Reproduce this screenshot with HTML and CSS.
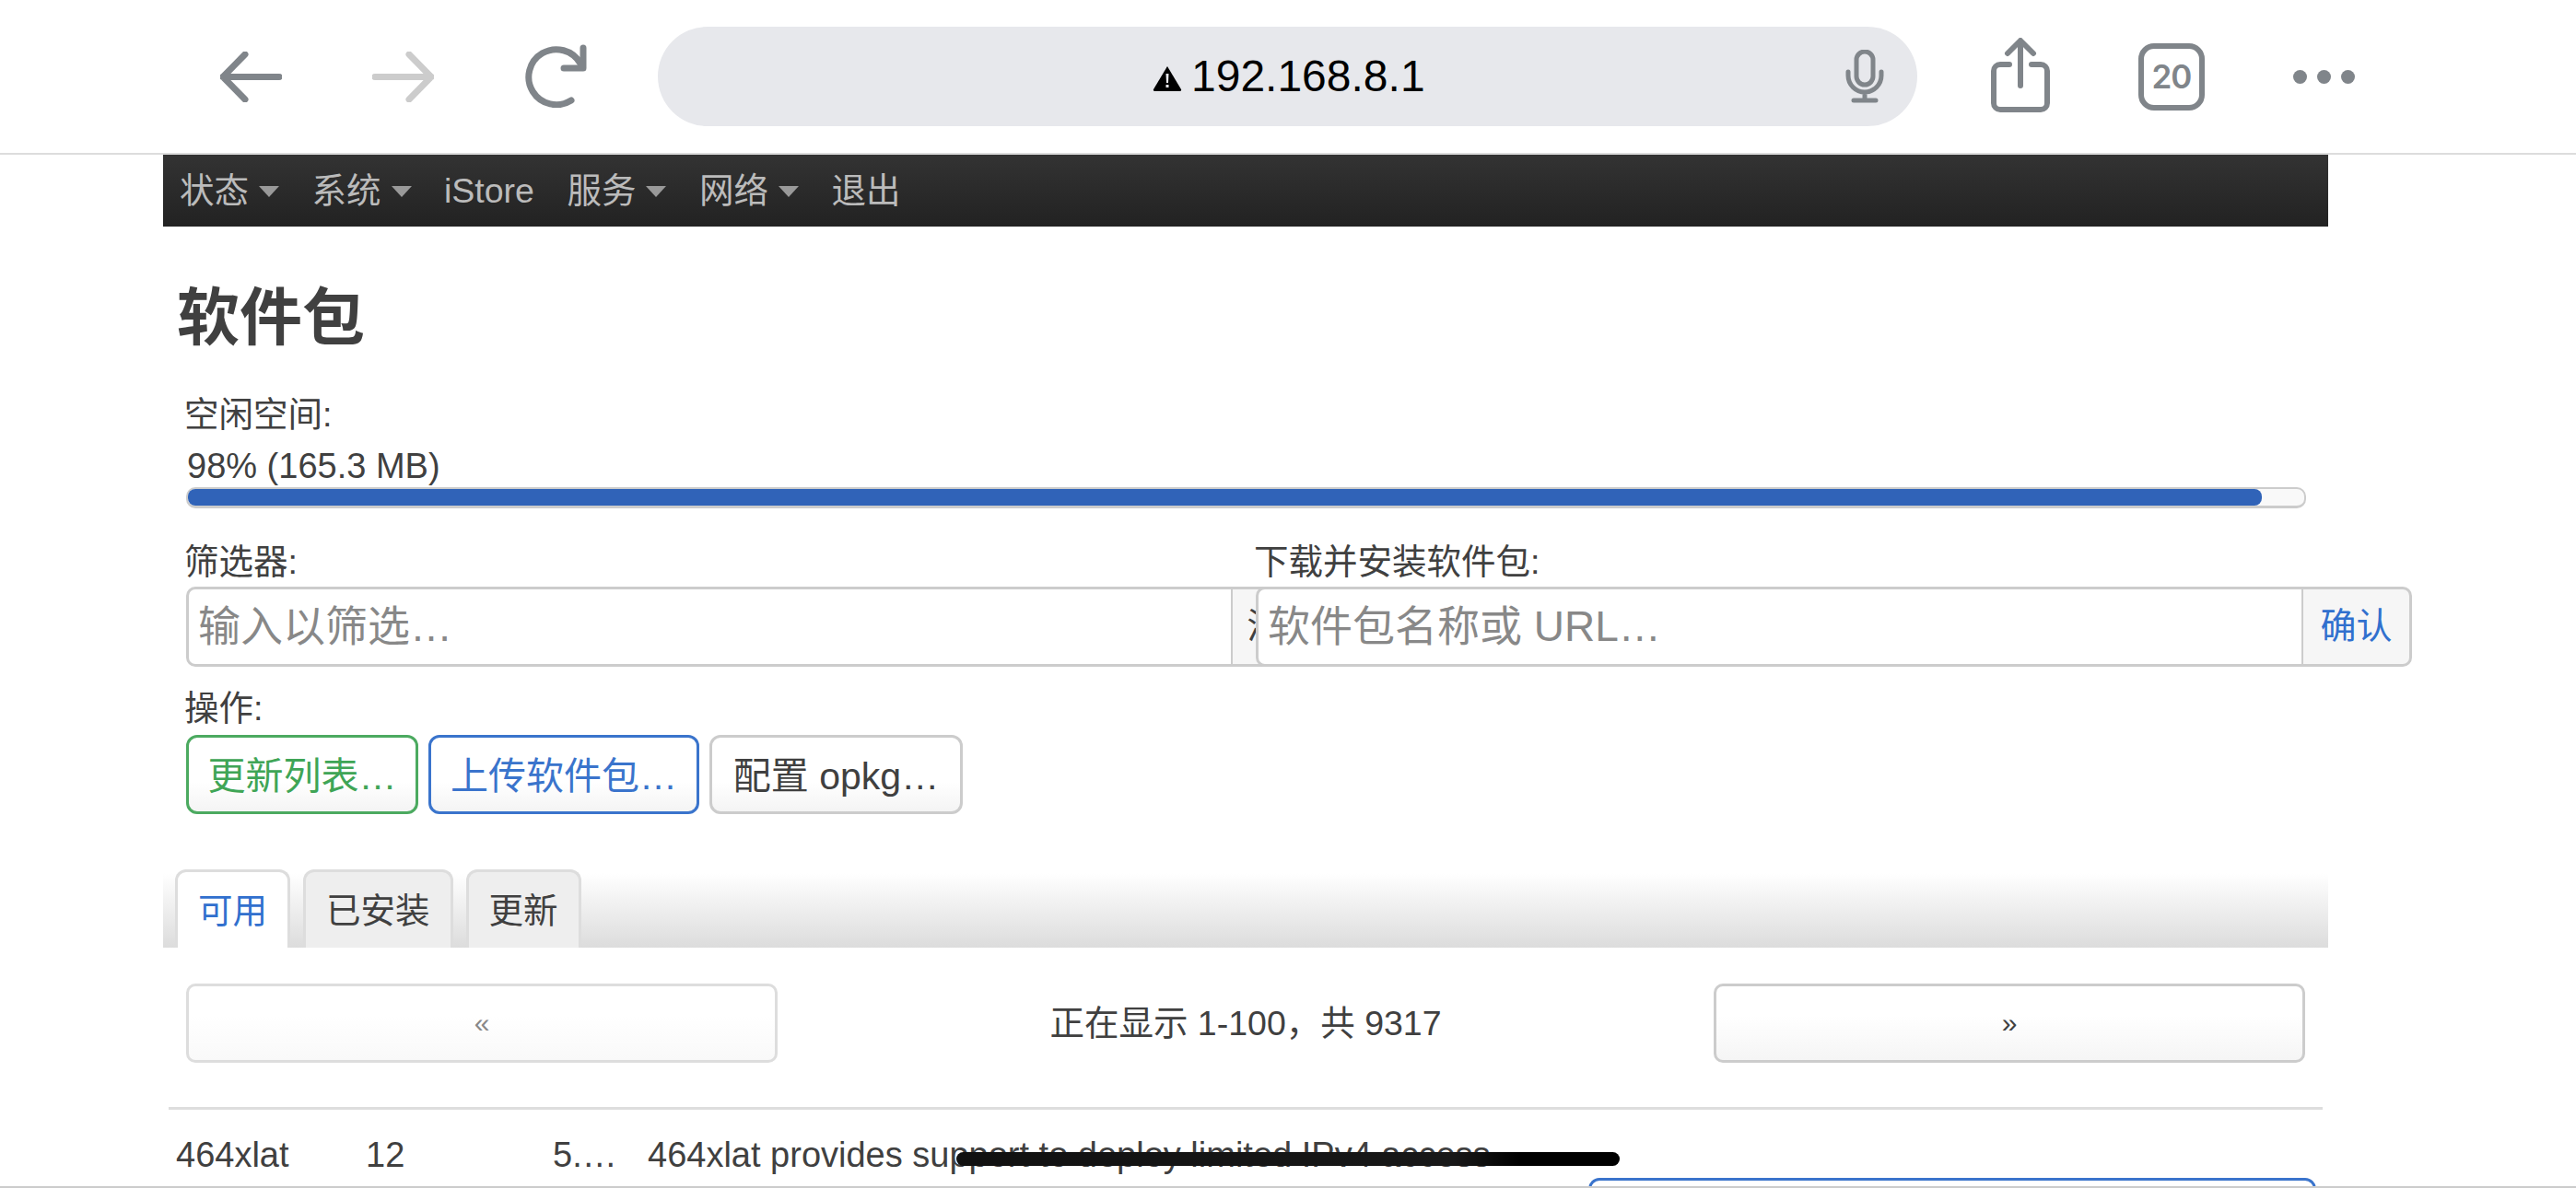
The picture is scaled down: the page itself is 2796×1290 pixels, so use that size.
FILE: index.html
```html
<!DOCTYPE html>
<html lang="zh">
<head>
<meta charset="utf-8">
<title>软件包</title>
<link rel="stylesheet" href="styles.css">
</head>
<body>
<header class="browser">
  <svg class="ic back" viewBox="0 0 67 55"><path d="M27 3 3 27.500 27 52M3 27.500H64"/></svg>
  <svg class="ic fwd" viewBox="0 0 67 55"><path d="M40 3 64 27.500 40 52M64 27.500H3"/></svg>
  <svg class="ic reload" viewBox="0 0 69 69"><path d="M51 61A30 30 0 1 1 61 21"/><path d="M64 4V26H43"/></svg>
  <div class="address">
    <div class="url">
      <svg class="warn" viewBox="0 0 32 28"><path class="warn-tri" d="M16 1 31 26a1.500 1.500 0 0 1-1 2H2a1.500 1.500 0 0 1-1-2Z"/><path class="warn-mark" d="M14.500 9h3l-.5 10h-2ZM14.500 21h3v3h-3Z"/></svg>
      <span>192.168.8.1</span>
    </div>
    <svg class="mic" viewBox="0 0 42 58"><rect x="12" y="2" width="18" height="36" rx="9"/><path d="M3 24V28A18 18 0 0 0 39 28V24M21 46V55M9 55H33"/></svg>
  </div>
  <svg class="ic share" viewBox="0 0 64 81"><path d="M20 29H10a7 7 0 0 0-7 7V71a7 7 0 0 0 7 7H54a7 7 0 0 0 7-7V36a7 7 0 0 0-7-7H44"/><path d="M32 52V4M18 17 32 3 46 17"/></svg>
  <div class="tabcount">20</div>
  <div class="dots"><i></i><i></i><i></i></div>
</header>

<nav class="nav">
  <a class="nav-item">状态<b class="caret"></b></a>
  <a class="nav-item">系统<b class="caret"></b></a>
  <a class="nav-item">iStore</a>
  <a class="nav-item">服务<b class="caret"></b></a>
  <a class="nav-item">网络<b class="caret"></b></a>
  <a class="nav-item">退出</a>
</nav>

<main class="content">
  <h2 class="title">软件包</h2>
  <div class="label">空闲空间:</div>
  <div class="free">98% (165.3 MB)</div>
  <div class="progress"><div class="progress-fill"></div></div>

  <div class="controls">
    <div class="control first">
      <div class="label">筛选器:</div>
      <div class="group">
        <div class="field">输入以筛选…</div>
        <div class="addon dark">清除</div>
      </div>
    </div>
    <div class="control second">
      <div class="label">下载并安装软件包:</div>
      <div class="group">
        <div class="field wide">软件包名称或 URL…</div>
        <div class="addon blue">确认</div>
      </div>
    </div>
  </div>

  <div class="label action-label">操作:</div>
  <div class="actions">
    <button class="btn green">更新列表…</button>
    <button class="btn blue-btn">上传软件包…</button>
    <button class="btn plain">配置 opkg…</button>
  </div>

  <div class="tabbar">
    <div class="tab active">可用</div>
    <div class="tab">已安装</div>
    <div class="tab">更新</div>
  </div>

  <div class="pager">
    <button class="page-btn muted">«</button>
    <div class="page-text">正在显示 1-100，共 9317</div>
    <button class="page-btn">»</button>
  </div>

  <div class="rule"></div>

  <div class="row">
    <div class="cell c-name">464xlat</div>
    <div class="cell c-ver">12</div>
    <div class="cell c-size">5.…</div>
    <div class="cell c-desc">464xlat provides support to deploy limited IPv4 access</div>
    <div class="install"></div>
  </div>
</main>
<div class="bottom-line"></div>
<div class="home"></div>
</body>
</html>
```

FILE: styles.css
```css
* { box-sizing: border-box; }
html, body { margin: 0; height: 1290px; overflow: hidden; background: #fff; }
body {
  font-family: "Liberation Sans", "Noto Sans CJK SC", sans-serif;
  font-size: 37.5px;
  color: #404040;
  position: relative;
}

/* browser chrome */
.browser {
  height: 168px;
  display: flex;
  align-items: center;
  position: relative;
  border-bottom: 2px solid #ddd;
}
.ic { fill: none; stroke: #80858a; stroke-width: 7; stroke-linecap: round; stroke-linejoin: round; flex: none; }
.back { width: 67px; height: 55px; margin-left: 239px; }
.fwd { width: 67px; height: 55px; margin-left: 98px; stroke: #ccc; }
.reload { width: 69px; height: 69px; margin-left: 98px; margin-top: -1px; }
.address {
  width: 1367px;
  height: 108px;
  margin-left: 76px;
  background: #e7e8ec;
  border-radius: 54px;
  display: flex;
  align-items: center;
  position: relative;
  flex: none;
}
.url {
  position: absolute;
  left: 537px;
  display: flex;
  align-items: center;
  gap: 10px;
  color: #000;
  font-size: 48px;
  line-height: 56px;
}
.warn { width: 32px; height: 28px; margin-top: 3px; }
.warn-tri { fill: #000; }
.warn-mark { fill: #e7e8ec; }
.mic {
  position: absolute;
  right: 36px;
  width: 42px;
  height: 58px;
  fill: none;
  stroke: #80858a;
  stroke-width: 5;
  stroke-linecap: round;
}
.share { width: 64px; height: 81px; margin-left: 80px; margin-top: -3px; stroke-width: 6; }
.tabcount {
  width: 72px;
  height: 73px;
  margin-left: 96px;
  border: 6px solid #80858a;
  border-radius: 17px;
  color: #80858a;
  font-family: Inter, sans-serif;
  font-size: 35px;
  font-weight: 600;
  letter-spacing: -1px;
  display: flex;
  align-items: center;
  justify-content: center;
  flex: none;
}
.dots { display: flex; gap: 11px; margin-left: 96px; }
.dots i { width: 15px; height: 15px; border-radius: 50%; background: #80858a; }

/* router nav */
.nav {
  margin-left: 177px;
  width: 2350px;
  height: 78px;
  background: linear-gradient(#333, #222);
  display: flex;
  align-items: center;
  padding-left: 18px;
  gap: 35.5px;
  line-height: 78px;
}
.nav-item { color: #bbb; display: flex; align-items: center; }
.caret {
  width: 0;
  height: 0;
  margin-left: 11px;
  margin-top: 2px;
  border-left: 11px solid transparent;
  border-right: 11px solid transparent;
  border-top: 12px solid #999;
}

/* page */
.content { margin-left: 177px; width: 2350px; }
.title {
  margin: 59px 0 38px 15px;
  font-size: 68px;
  line-height: 80px;
  font-weight: 700;
}
.label { margin-left: 23px; line-height: 54px; }
.free { margin: 4px 0 0 26px; line-height: 50px; font-size: 38px; }
.progress {
  margin: -2px 0 0 25px;
  width: 2301px;
  height: 23px;
  border: 3px solid #ccc;
  border-width: 2px 2px 3px;
  border-radius: 10px;
  background: #f9f9f9;
}
.progress-fill { width: 98%; height: 100%; background: #3063b8; border-radius: 8px; }

.controls { display: flex; margin-top: 31px; height: 141px; }
.control .label { margin-left: -2px; }
.first { margin-left: 25px; width: 1161px; flex: none; position: relative; z-index: 0; }
.second { width: 1255px; flex: none; position: relative; z-index: 1; }
.group { display: flex; height: 87px; }
.first .group { width: 1248px; }
.field {
  flex: 1;
  background: #fff;
  border: 3px solid #ccc;
  border-right-width: 2px;
  border-radius: 10px 0 0 10px;
  padding-left: 10px;
  font-size: 46px;
  line-height: 80px;
  color: #888;
  white-space: nowrap;
}
.addon {
  flex: none;
  border: 3px solid #ccc;
  border-left-width: 0;
  border-radius: 0 10px 10px 0;
  background: #f6f6f6;
  font-size: 39px;
  line-height: 80px;
  text-align: center;
}
.addon.dark { width: 112px; color: #404040; }
.addon.blue { width: 118px; color: #3170ce; }

.action-label { margin-top: 18px; }
.actions { display: flex; gap: 11px; margin: 2px 0 0 25px; }
.btn {
  height: 86px;
  padding: 0 0 5px;
  border: 3px solid #ccc;
  border-radius: 12px;
  background: linear-gradient(#fff, #fff 60%, #f4f4f4);
  font: inherit;
  font-size: 41px;
  color: #404040;
}
.green { width: 252px; border-color: #4caa60; color: #3fa556; }
.blue-btn { width: 294px; border-color: #3a74cc; color: #3a74cc; }
.plain { width: 275px; }

.tabbar {
  margin-top: 60px;
  height: 85px;
  display: flex;
  gap: 14px;
  padding-left: 13px;
  background: linear-gradient(#fff, #fff 5%, #dcdcdc);
}
.tab {
  height: 85px;
  padding: 0 22px;
  border: 3px solid #ddd;
  border-bottom: 0;
  border-radius: 12px 12px 0 0;
  background: #eee;
  line-height: 84px;
}
.tab.active { background: #fff; color: #3170ce; }

.pager { display: flex; align-items: center; margin: 39px 25px 0 25px; justify-content: space-between; }
.page-btn {
  width: 642px;
  height: 86px;
  border: 3px solid #ccc;
  border-radius: 10px;
  background: linear-gradient(#fff, #fff 40%, #f5f5f5);
  font: inherit;
  font-size: 30px;
  color: #404040;
}
.page-btn.muted { border-color: #ddd; color: #888; background: linear-gradient(#fff, #fff 40%, #f9f9f9); }
.page-text { line-height: 54px; }

.rule { margin: 48px 6px 0; height: 3px; background: #ddd; }

.row { display: flex; margin-top: 26px; line-height: 46px; position: relative; font-size: 38px; }
.cell { flex: none; white-space: nowrap; }
.c-name { margin-left: 14px; width: 206px; }
.c-ver { width: 203px; }
.c-size { width: 103px; }
.c-desc { width: 1021px; }
.install {
  width: 790px;
  height: 60px;
  margin-top: 48px;
  border: 3px solid #3a74cc;
  border-radius: 12px;
  background: #fff;
  flex: none;
}

.bottom-line { position: absolute; left: 0; right: 0; top: 1288px; height: 2px; background: #ccc; }
.home {
  position: absolute;
  left: 1038px;
  top: 1251px;
  width: 720px;
  height: 15px;
  border-radius: 8px;
  background: linear-gradient(90deg, #111, #181818 75%, #000 85%);
}
```
